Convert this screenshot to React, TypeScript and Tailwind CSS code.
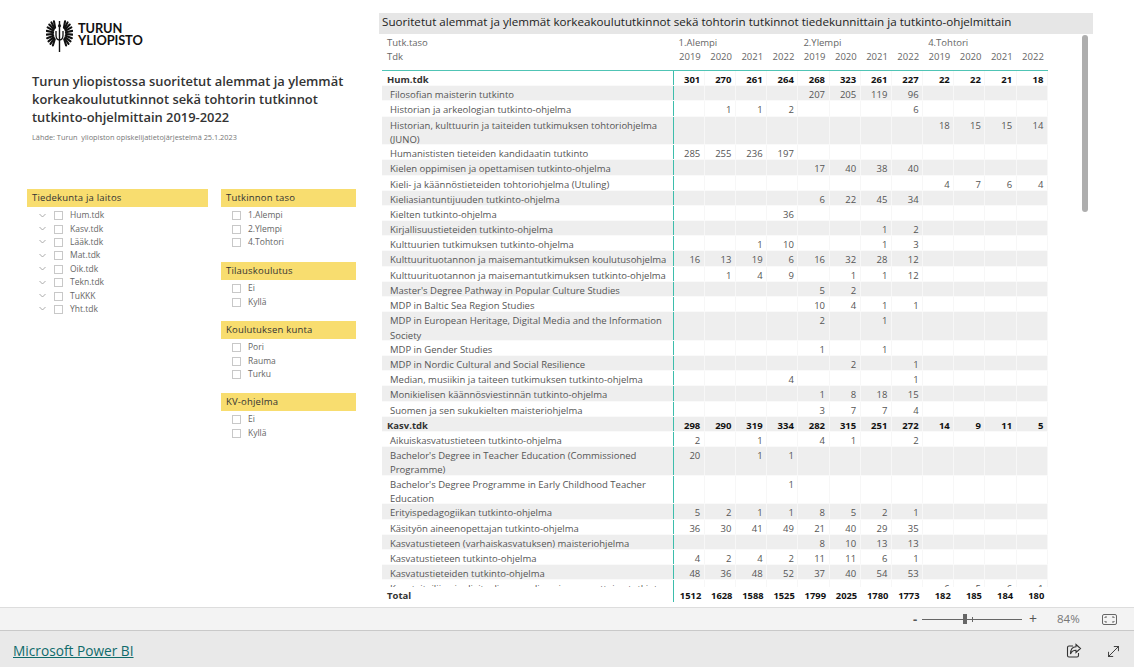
import React from 'react';
import { MoveDiagonal } from 'lucide-react';

type Row = { name: string; vals?: (number | null)[]; bold?: boolean; tall?: boolean };

const _ = null;

const rows: Row[] = [
  { name: 'Hum.tdk', bold: true, vals: [301, 270, 261, 264, 268, 323, 261, 227, 22, 22, 21, 18] },
  { name: 'Filosofian maisterin tutkinto', vals: [_, _, _, _, 207, 205, 119, 96, _, _, _, _] },
  { name: 'Historian ja arkeologian tutkinto-ohjelma', vals: [_, 1, 1, 2, _, _, _, 6, _, _, _, _] },
  { name: 'Historian, kulttuurin ja taiteiden tutkimuksen tohtoriohjelma (JUNO)', tall: true, vals: [_, _, _, _, _, _, _, _, 18, 15, 15, 14] },
  { name: 'Humanististen tieteiden kandidaatin tutkinto', vals: [285, 255, 236, 197, _, _, _, _, _, _, _, _] },
  { name: 'Kielen oppimisen ja opettamisen tutkinto-ohjelma', vals: [_, _, _, _, 17, 40, 38, 40, _, _, _, _] },
  { name: 'Kieli- ja käännöstieteiden tohtoriohjelma (Utuling)', vals: [_, _, _, _, _, _, _, _, 4, 7, 6, 4] },
  { name: 'Kieliasiantuntijuuden tutkinto-ohjelma', vals: [_, _, _, _, 6, 22, 45, 34, _, _, _, _] },
  { name: 'Kielten tutkinto-ohjelma', vals: [_, _, _, 36, _, _, _, _, _, _, _, _] },
  { name: 'Kirjallisuustieteiden tutkinto-ohjelma', vals: [_, _, _, _, _, _, 1, 2, _, _, _, _] },
  { name: 'Kulttuurien tutkimuksen tutkinto-ohjelma', vals: [_, _, 1, 10, _, _, 1, 3, _, _, _, _] },
  { name: 'Kulttuurituotannon ja maisemantutkimuksen koulutusohjelma', vals: [16, 13, 19, 6, 16, 32, 28, 12, _, _, _, _] },
  { name: 'Kulttuurituotannon ja maisemantutkimuksen tutkinto-ohjelma', vals: [_, 1, 4, 9, _, 1, 1, 12, _, _, _, _] },
  { name: "Master's Degree Pathway in Popular Culture Studies", vals: [_, _, _, _, 5, 2, _, _, _, _, _, _] },
  { name: 'MDP in Baltic Sea Region Studies', vals: [_, _, _, _, 10, 4, 1, 1, _, _, _, _] },
  { name: 'MDP in European Heritage, Digital Media and the Information Society', tall: true, vals: [_, _, _, _, 2, _, 1, _, _, _, _, _] },
  { name: 'MDP in Gender Studies', vals: [_, _, _, _, 1, _, 1, _, _, _, _, _] },
  { name: 'MDP in Nordic Cultural and Social Resilience', vals: [_, _, _, _, _, 2, _, 1, _, _, _, _] },
  { name: 'Median, musiikin ja taiteen tutkimuksen tutkinto-ohjelma', vals: [_, _, _, 4, _, _, _, 1, _, _, _, _] },
  { name: 'Monikielisen käännösviestinnän tutkinto-ohjelma', vals: [_, _, _, _, 1, 8, 18, 15, _, _, _, _] },
  { name: 'Suomen ja sen sukukielten maisteriohjelma', vals: [_, _, _, _, 3, 7, 7, 4, _, _, _, _] },
  { name: 'Kasv.tdk', bold: true, vals: [298, 290, 319, 334, 282, 315, 251, 272, 14, 9, 11, 5] },
  { name: 'Aikuiskasvatustieteen tutkinto-ohjelma', vals: [2, _, 1, _, 4, 1, _, 2, _, _, _, _] },
  { name: "Bachelor's Degree in Teacher Education (Commissioned Programme)", tall: true, vals: [20, _, 1, 1, _, _, _, _, _, _, _, _] },
  { name: "Bachelor's Degree Programme in Early Childhood Teacher Education", tall: true, vals: [_, _, _, 1, _, _, _, _, _, _, _, _] },
  { name: 'Erityispedagogiikan tutkinto-ohjelma', vals: [5, 2, 1, 1, 8, 5, 2, 1, _, _, _, _] },
  { name: 'Käsityön aineenopettajan tutkinto-ohjelma', vals: [36, 30, 41, 49, 21, 40, 29, 35, _, _, _, _] },
  { name: 'Kasvatustieteen (varhaiskasvatuksen) maisteriohjelma', vals: [_, _, _, _, 8, 10, 13, 13, _, _, _, _] },
  { name: 'Kasvatustieteen tutkinto-ohjelma', vals: [4, 2, 4, 2, 11, 11, 6, 1, _, _, _, _] },
  { name: 'Kasvatustieteiden tutkinto-ohjelma', vals: [48, 36, 48, 52, 37, 40, 54, 53, _, _, _, _] },
  { name: 'Kuvataiteilijan ja digitaalisen median aineenopettajan tutkinto', vals: [_, _, _, _, _, _, _, _, 6, 5, 6, 1] },
];

const totals = [1512, 1628, 1588, 1525, 1799, 2025, 1780, 1773, 182, 185, 184, 180];
const years = [2019, 2020, 2021, 2022];

// left and right wing feathers for the logo
const feathers = [0, 1, 2, 3, 4, 5, 6, 7, 8, 9];

function Logo() {
  return (
    <div className="flex items-start gap-[5px]">
      <svg width="27" height="32" viewBox="0 0 27 32" className="block">
        {feathers.map((i) => {
          const a = -80 + i * 17;
          const r = (a * Math.PI) / 180;
          const x1 = 17.5 + Math.cos(r) * 2.5;
          const y1 = 13.5 + Math.sin(r) * 6;
          const x2 = 17.5 + Math.cos(r) * 9;
          const y2 = 13.5 + Math.sin(r) * 12.5;
          return (
            <g key={i} stroke="#111" strokeWidth="2.1" strokeLinecap="round">
              <line x1={x1} y1={y1} x2={x2} y2={y2} />
              <line x1={27 - x1} y1={y1} x2={27 - x2} y2={y2} />
            </g>
          );
        })}
        <path d="M13.5 1 V32" stroke="#111" strokeWidth="1.4" />
        <path d="M13.5 3 L11.8 6 L13.5 8 L15.2 6 Z" fill="#111" />
        <path d="M10 11 V15 Q10 20 13.5 20 Q17 20 17 15 V11" fill="none" stroke="#111" strokeWidth="1.3" />
      </svg>
      <div className="mt-[2px] text-[12.8px] leading-[12px] font-bold text-[#111] tracking-[-0.1px] font-['Lato',sans-serif]">
        <div>TURUN</div>
        <div>YLIOPISTO</div>
      </div>
    </div>
  );
}

function Slicer({ title, items, tree, className }: { title: string; items: string[]; tree?: boolean; className?: string }) {
  return (
    <div className={className}>
      <div className="h-[18px] bg-[#f8dd6f] pl-[5px] text-[9.5px] leading-[17px] tracking-[0.02em] text-[#333]">{title}</div>
      <div className={`mt-[2px] flex flex-col ${tree ? 'pl-[12px]' : 'pl-[11px]'}`}>
        {items.map((item) => (
          <div key={item} className="flex h-[13.4px] items-center">
            {tree && (
              <svg width="15" height="10" viewBox="0 0 15 10" className="shrink-0">
                <path d="M0.5 3 L3.5 6 L6.5 3" fill="none" stroke="#a0a0a0" strokeWidth="0.9" />
              </svg>
            )}
            <span className="h-[9px] w-[9px] shrink-0 border border-[#c8c8c8] bg-white" />
            <span className="ml-[7px] text-[8.5px] text-[#666]">{item}</span>
          </div>
        ))}
      </div>
    </div>
  );
}

function NumCells({ vals, bold }: { vals: (number | null)[]; bold?: boolean }) {
  return (
    <>
      {vals.map((v, i) => (
        <div
          key={i}
          className={`w-[31.2px] shrink-0 border-r border-[#f7f7f7] pr-[3.5px] pt-[2px] text-right ${bold ? 'font-bold text-[#111]' : 'text-[#555]'}`}
        >
          {v}
        </div>
      ))}
    </>
  );
}

function ShareIcon() {
  return (
    <svg width="16" height="16" viewBox="0 0 16 16" fill="none" stroke="#333" strokeWidth="1.1">
      <path d="M7 3 H3 Q1.5 3 1.5 4.5 V12.5 Q1.5 14 3 14 H11 Q12.5 14 12.5 12.5 V10" />
      <path d="M10 1.5 L14.5 5.5 L10 9.5 V7.3 Q6 7.3 4.5 11 Q4.5 4 10 3.8 Z" />
    </svg>
  );
}

export default function App() {
  return (
    <div className="flex h-[667px] w-[1134px] flex-col overflow-hidden bg-white font-['Open_Sans',sans-serif]">
      <div className="flex h-[607px] shrink-0">
        {/* Left column */}
        <div className="w-[379px] shrink-0">
          <div className="pl-[46px] pt-[20px]">
            <Logo />
          </div>
          <h1 className="ml-[32px] mt-[20px] text-[12.9px] font-semibold leading-[18px] text-[#333]">
            Turun yliopistossa suoritetut alemmat ja ylemmät
            <br />
            korkeakoulututkinnot sekä tohtorin tutkinnot
            <br />
            tutkinto-ohjelmittain 2019-2022
          </h1>
          <p className="ml-[32px] mt-[6px] text-[7.35px] leading-[10px] text-[#777]">
            Lähde: Turun&nbsp; yliopiston opiskelijatietojärjestelmä 25.1.2023
          </p>
          <div className="ml-[27px] mt-[47px] flex gap-[13px]">
            <Slicer
              className="w-[181px]"
              title="Tiedekunta ja laitos"
              tree
              items={['Hum.tdk', 'Kasv.tdk', 'Lääk.tdk', 'Mat.tdk', 'Oik.tdk', 'Tekn.tdk', 'TuKKK', 'Yht.tdk']}
            />
            <div className="flex w-[135px] flex-col">
              <Slicer title="Tutkinnon taso" items={['1.Alempi', '2.Ylempi', '4.Tohtori']} />
              <Slicer className="mt-[13px]" title="Tilauskoulutus" items={['Ei', 'Kyllä']} />
              <Slicer className="mt-[12px]" title="Koulutuksen kunta" items={['Pori', 'Rauma', 'Turku']} />
              <Slicer className="mt-[12px]" title="KV-ohjelma" items={['Ei', 'Kyllä']} />
            </div>
          </div>
        </div>

        {/* Table */}
        <div className="relative w-[714px] shrink-0 pt-[13px]">
          <div className="h-[21px] bg-[#e6e6e6] pl-[3px] text-[11.65px] leading-[18px] text-[#222]">
            Suoritetut alemmat ja ylemmät korkeakoulututkinnot sekä tohtorin tutkinnot tiedekunnittain ja tutkinto-ohjelmittain
          </div>
          <div className="ml-[3px] w-[666px] text-[9.5px]">
            <div className="h-[37px] border-b border-[#50c4b5] pt-[2px] text-[#666]">
              <div className="flex h-[14px] items-center">
                <div className="w-[291.6px] shrink-0 pl-[5px]">Tutk.taso</div>
                <div className="w-[124.8px] shrink-0 pl-[5px]">1.Alempi</div>
                <div className="w-[124.8px] shrink-0 pl-[5px]">2.Ylempi</div>
                <div className="w-[124.8px] shrink-0 pl-[5px]">4.Tohtori</div>
              </div>
              <div className="flex h-[14px] items-center">
                <div className="w-[291.6px] shrink-0 pl-[5px]">Tdk</div>
                {[0, 1, 2].flatMap((g) =>
                  years.map((y) => (
                    <div key={`${g}-${y}`} className="w-[31.2px] shrink-0 pr-[4px] text-right">
                      {y}
                    </div>
                  )),
                )}
              </div>
            </div>
            <div className="h-[516px] overflow-hidden">
              {rows.map((r, i) => (
                <div
                  key={r.name}
                  className={`flex border-b border-[#fafafa] leading-[14.3px] ${r.tall ? 'h-[28.6px]' : 'h-[15.2px]'} ${i % 2 === 1 ? 'bg-[#eeeeee]' : 'bg-white'}`}
                >
                  <div
                    className={`w-[291.6px] shrink-0 border-r border-[#3dbdac] pr-[4px] pt-[2px] ${r.tall ? '' : 'whitespace-nowrap'} ${r.bold ? 'pl-[5px] font-bold text-[#333]' : 'pl-[8px] text-[#555]'}`}
                  >
                    {r.name}
                  </div>
                  <NumCells vals={r.vals ?? []} bold={r.bold} />
                </div>
              ))}
            </div>
            <div className="flex h-[14.6px] leading-[15px] font-bold">
              <div className="w-[291.6px] shrink-0 border-r border-[#3dbdac] pl-[5px] pt-[1px] text-[#333]">Total</div>
              {totals.map((t) => (
                <div key={t} className="w-[31.2px] shrink-0 pr-[3.5px] pt-[1px] text-right text-[9.4px] text-[#111]">
                  {t}
                </div>
              ))}
            </div>
          </div>
          {/* scrollbar sits over the table */}
          <div className="absolute left-[703px] top-[35px] h-[177px] w-[6px] rounded-[3px] bg-[#aeaeae]" />
        </div>
      </div>

      {/* Zoom bar */}
      <div className="flex h-[24px] shrink-0 items-center border-y border-t-[#dddddd] border-b-[#c9c9c9] bg-[#f3f3f3] pl-[913px] text-[#555]">
        <span className="w-[9px] text-[13px] font-bold leading-none">-</span>
        <div className="relative h-[1px] w-[100px] bg-[#666]">
          <span className="absolute left-[41px] top-[-5px] h-[10px] w-[4px] bg-[#666]" />
          <span className="absolute left-[50px] top-[-2px] h-[5px] w-[1px] bg-[#666]" />
        </div>
        <span className="ml-[5px] w-[12px] text-center text-[14px] leading-none">+</span>
        <span className="ml-[18px] text-[11.5px] text-[#777]">84%</span>
        <svg width="15" height="11" viewBox="0 0 15 11" fill="none" stroke="#666" className="ml-[22px]">
          <rect x="0.5" y="0.5" width="14" height="10" rx="1.5" />
          <path d="M3 4 V3 H5 M10 3 H12 V4 M3 7 V8 H5 M10 8 H12 V7" />
        </svg>
      </div>

      {/* Footer */}
      <div className="flex flex-1 items-center bg-[#e9e9e9] pl-[13px] pr-[12px] pt-[4px]">
        <a className="text-[13.7px] text-[#0f6b6b] underline">Microsoft Power BI</a>
        <div className="ml-auto flex items-center gap-[23px]">
          <ShareIcon />
          <MoveDiagonal size={17} strokeWidth={1.2} color="#222" />
        </div>
      </div>
    </div>
  );
}
